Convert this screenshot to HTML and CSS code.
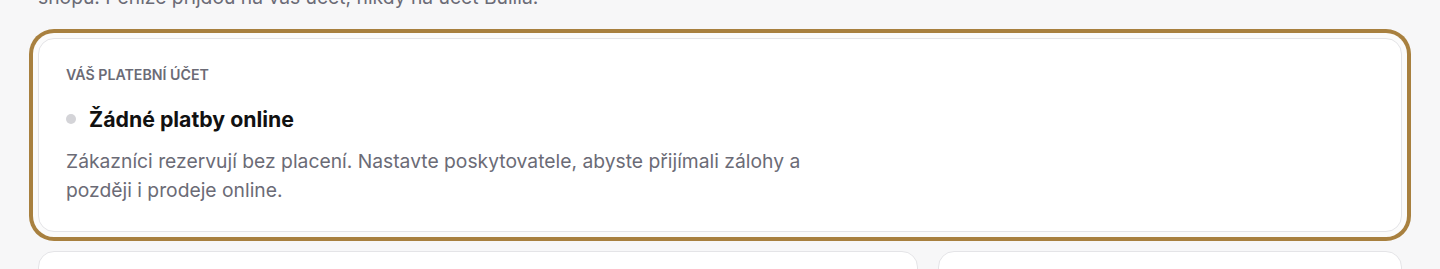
FILE: index.html
```html
<!DOCTYPE html>
<html lang="cs">

<head>
  <meta charset="UTF-8">
  <meta name="viewport" content="width=device-width, initial-scale=1.0">
  <title>Platby</title>
  <link rel="stylesheet" href="styles.css">
</head>

<body>
  <div class="page">
    <p class="intro">shopu. Peníze přijdou na váš účet, nikdy na účet Bulila.</p>

    <div class="account-card">
      <div class="account-label">Váš platební účet</div>
      <div class="account-title">
        <span class="status-dot"></span>
        <span>Žádné platby online</span>
      </div>
      <p class="account-text">Zákazníci rezervují bez placení. Nastavte poskytovatele, abyste přijímali zálohy a později i prodeje online.</p>
    </div>

    <div class="provider-grid">
      <div class="provider-card"></div>
      <div class="provider-card"></div>
    </div>
  </div>
</body>

</html>
```

FILE: styles.css
```css
* {
  box-sizing: border-box;
}

body {
  margin: 0;
  background: #f7f7f8;
  font-family: Inter, "Noto Sans", sans-serif;
  color: #111111;
  overflow: hidden;
}

p {
  margin: 0;
}

.page {
  padding: 0 38px;
}

.intro {
  margin-top: -17px;
  font-size: 19.3px;
  line-height: 28px;
  color: #6b6b76;
}

.account-card {
  margin-top: 27px;
  background: #ffffff;
  border: 1px solid #e4e4e7;
  border-radius: 16px;
  padding: 27px 27px 28px 27px;
  height: 194px;
  box-shadow: 0 0 0 5px #fbfbfb, 0 0 0 9px #a8803f;
}

.account-label {
  font-size: 14.2px;
  font-weight: 600;
  text-transform: uppercase;
  color: #6b6b76;
  line-height: 18px;
}

.account-title {
  display: flex;
  align-items: center;
  gap: 13px;
  margin-top: 21px;
  font-size: 21.3px;
  font-weight: 700;
  line-height: 28px;
}

.status-dot {
  width: 10px;
  height: 10px;
  border-radius: 50%;
  background: #d4d4d8;
}

.account-text {
  margin-top: 14px;
  max-width: 770px;
  font-size: 19.3px;
  line-height: 29px;
  color: #6b6b76;
}

.provider-grid {
  display: grid;
  grid-template-columns: 880px 1fr;
  gap: 20px;
  margin-top: 19px;
}

.provider-card {
  height: 80px;
  background: #ffffff;
  border: 1px solid #e4e4e7;
  border-radius: 16px;
}
```
